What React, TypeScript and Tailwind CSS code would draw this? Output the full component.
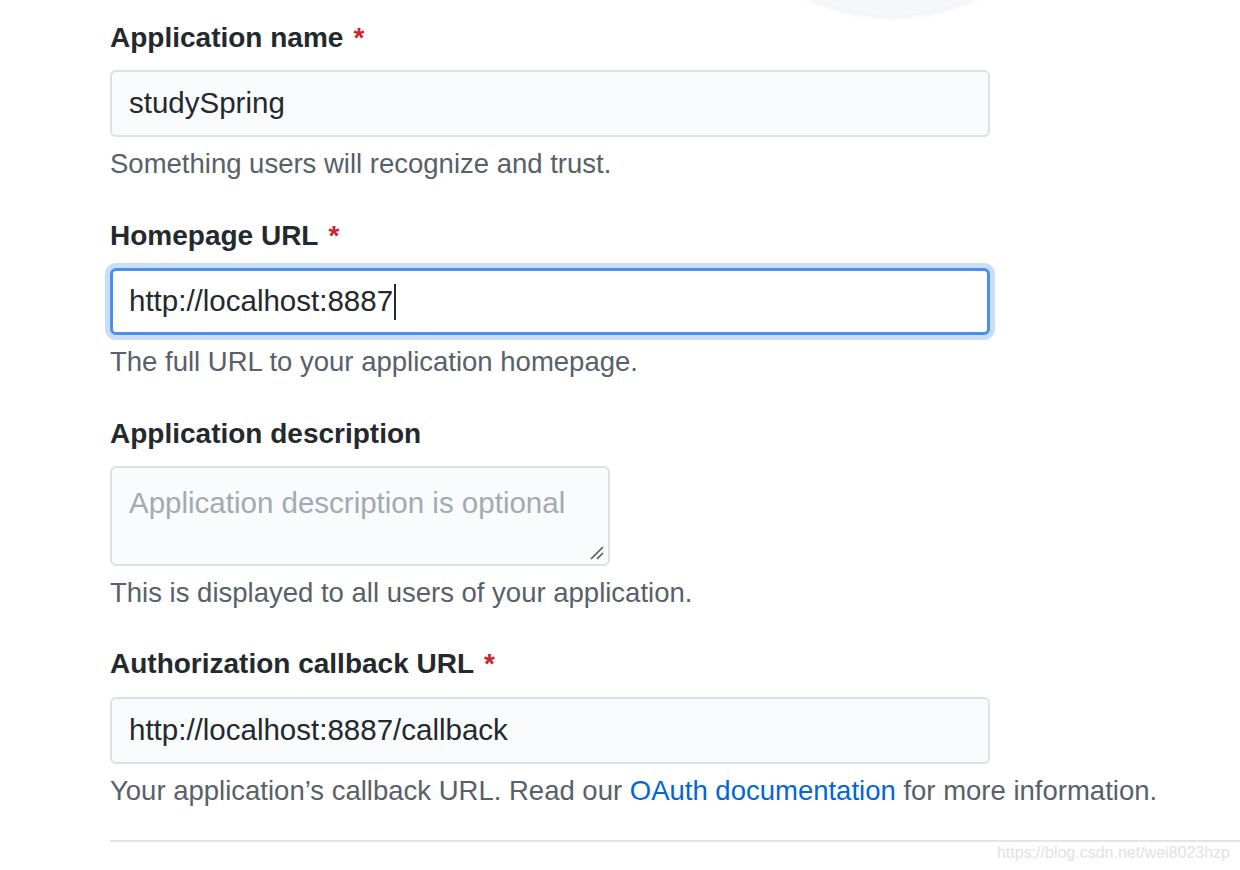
import React from 'react';

function Label({ text, required }: { text: string; required?: boolean }) {
  return (
    <div className="h-[36px] leading-[36px] text-[28px] font-bold text-[#24292e] whitespace-nowrap">
      {text}
      {required && <span className="ml-[10px] text-[#cb2431]">*</span>}
    </div>
  );
}

function Note({ children }: { children: React.ReactNode }) {
  return (
    <p className="mt-[9px] h-[36px] leading-[36px] text-[27.5px] text-[#586069] whitespace-nowrap">
      {children}
    </p>
  );
}

export default function App() {
  return (
    <div
      className="relative w-[1240px] h-[870px] overflow-hidden bg-white"
      style={{ fontFamily: '"Liberation Sans", Arial, sans-serif' }}
    >
      {/* avatar circle peeking in from the top */}
      <div className="absolute left-[697px] top-[-375px] w-[390px] h-[390px] rounded-full bg-[#f6f7fa] shadow-[0_2px_6px_rgba(27,31,35,0.08)]" />

      <div className="relative pl-[110px] pt-[20px]">
        {/* Application name */}
        <div>
          <Label text="Application name" required />
          <div className="mt-[14px] w-[880px] h-[67px] flex items-center px-[17px] rounded-[6px] border-2 border-[#dde1e5] bg-[#fafbfc] text-[29.5px] text-[#24292e]">
            studySpring
          </div>
          <Note>Something users will recognize and trust.</Note>
        </div>

        {/* Homepage URL */}
        <div className="mt-[36px]">
          <Label text="Homepage URL" required />
          <div className="mt-[14px] w-[880px] h-[67px] flex items-center px-[16px] rounded-[6px] border-[3px] border-[#4a8ff0] bg-white shadow-[0_0_0_5px_rgba(3,102,214,0.22)] text-[29.5px] text-[#24292e]">
            http://localhost:8887
            <span className="ml-[1px] inline-block w-[2px] h-[36px] bg-[#24292e]" />
          </div>
          <Note>The full URL to your application homepage.</Note>
        </div>

        {/* Application description */}
        <div className="mt-[36px]">
          <Label text="Application description" />
          <div className="relative mt-[14px] w-[500px] h-[100px] px-[17px] pt-[13px] rounded-[6px] border-2 border-[#dde1e5] bg-[#fafbfc] text-[29.5px] text-[#a3aab1] whitespace-nowrap">
            Application description is optional
            <svg className="absolute right-[3px] bottom-[3px]" width="16" height="16" viewBox="0 0 16 16">
              <line x1="2" y1="14" x2="14" y2="2" stroke="#555" strokeWidth="1.6" />
              <line x1="8" y1="14" x2="14" y2="8" stroke="#555" strokeWidth="1.6" />
            </svg>
          </div>
          <Note>This is displayed to all users of your application.</Note>
        </div>

        {/* Authorization callback URL */}
        <div className="mt-[35px]">
          <Label text="Authorization callback URL" required />
          <div className="mt-[15px] w-[880px] h-[67px] flex items-center px-[17px] rounded-[6px] border-2 border-[#dde1e5] bg-[#fafbfc] text-[29.5px] text-[#24292e]">
            http://localhost:8887/callback
          </div>
          <Note>
            Your application’s callback URL. Read our{' '}
            <a className="text-[#0366d6]">OAuth documentation</a> for more information.
          </Note>
        </div>

        <hr className="mt-[31px] border-0 border-t-2 border-[#e1e4e8]" />
      </div>

      <div className="absolute right-[10px] top-[841px] text-[16px] text-[#e2e2e2] whitespace-nowrap">
        https://blog.csdn.net/wei8023hzp
      </div>
    </div>
  );
}
